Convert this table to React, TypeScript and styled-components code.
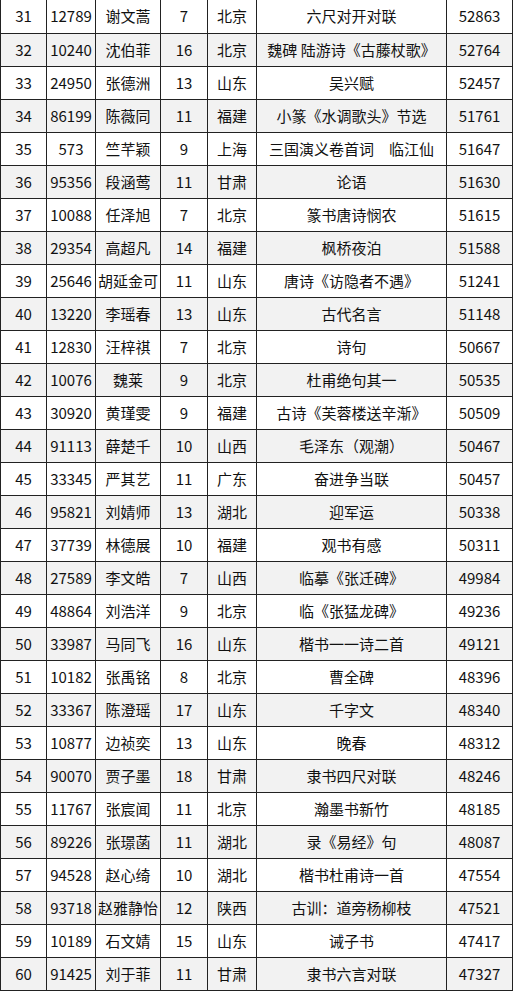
import React from "react";
import styled, { createGlobalStyle } from "styled-components";

const Global = createGlobalStyle`
  html, body { margin: 0; padding: 0; background: #fff; }
  body { font-family: "Noto Sans CJK SC", "Noto Sans", sans-serif; }
`;

type Row = [number, string, string, number, string, string, string];

const rows: Row[] = [
  [31, "12789", "谢文蒿", 7, "北京", "六尺对开对联", "52863"],
  [32, "10240", "沈伯菲", 16, "北京", "魏碑 陆游诗《古藤杖歌》", "52764"],
  [33, "24950", "张德洲", 13, "山东", "吴兴赋", "52457"],
  [34, "86199", "陈薇同", 11, "福建", "小篆《水调歌头》节选", "51761"],
  [35, "573", "竺芊颖", 9, "上海", "三国演义卷首词　临江仙", "51647"],
  [36, "95356", "段涵莺", 11, "甘肃", "论语", "51630"],
  [37, "10088", "任泽旭", 7, "北京", "篆书唐诗悯农", "51615"],
  [38, "29354", "高超凡", 14, "福建", "枫桥夜泊", "51588"],
  [39, "25646", "胡延金可", 11, "山东", "唐诗《访隐者不遇》", "51241"],
  [40, "13220", "李瑶春", 13, "山东", "古代名言", "51148"],
  [41, "12830", "汪梓祺", 7, "北京", "诗句", "50667"],
  [42, "10076", "魏莱", 9, "北京", "杜甫绝句其一", "50535"],
  [43, "30920", "黄瑾雯", 9, "福建", "古诗《芙蓉楼送辛渐》", "50509"],
  [44, "91113", "薛楚千", 10, "山西", "毛泽东（观潮）", "50467"],
  [45, "33345", "严其艺", 11, "广东", "奋进争当联", "50457"],
  [46, "95821", "刘婧师", 13, "湖北", "迎军运", "50338"],
  [47, "37739", "林德展", 10, "福建", "观书有感", "50311"],
  [48, "27589", "李文皓", 7, "山西", "临摹《张迁碑》", "49984"],
  [49, "48864", "刘浩洋", 9, "北京", "临《张猛龙碑》", "49236"],
  [50, "33987", "马同飞", 16, "山东", "楷书一一诗二首", "49121"],
  [51, "10182", "张禹铭", 8, "北京", "曹全碑", "48396"],
  [52, "33367", "陈澄瑶", 17, "山东", "千字文", "48340"],
  [53, "10877", "边祯奕", 13, "山东", "晚春", "48312"],
  [54, "90070", "贾子墨", 18, "甘肃", "隶书四尺对联", "48246"],
  [55, "11767", "张宸闻", 11, "北京", "瀚墨书新竹", "48185"],
  [56, "89226", "张璟菡", 11, "湖北", "录《易经》句", "48087"],
  [57, "94528", "赵心绮", 10, "湖北", "楷书杜甫诗一首", "47554"],
  [58, "93718", "赵雅静怡", 12, "陕西", "古训：道旁杨柳枝", "47521"],
  [59, "10189", "石文婧", 15, "山东", "诫子书", "47417"],
  [60, "91425", "刘于菲", 11, "甘肃", "隶书六言对联", "47327"],
];

const widths = [46, 49, 65, 47, 49, 190, 66];

const Table = styled.table`
  border-collapse: collapse;
  table-layout: fixed;
  width: 513px;
  color: #111;
  font-size: 15px;
  border-left: 1px solid #222;
  border-right: 1px solid #222;
`;

const Tr = styled.tr<{ $shaded: boolean }>`
  height: 33px;
  background: ${(p) => (p.$shaded ? "#f2f2f2" : "#ffffff")};
`;

const Td = styled.td`
  border-left: 1px solid #222;
  border-right: 1px solid #222;
  border-bottom: 1px solid #222;
  padding: 0;
  text-align: center;
  vertical-align: middle;
  white-space: nowrap;
  overflow: hidden;
  line-height: 32px;
`;

export default function App() {
  return (
    <>
      <Global />
      <Table>
        <colgroup>
          {widths.map((w, i) => (
            <col key={i} style={{ width: w }} />
          ))}
        </colgroup>
        <tbody>
          {rows.map((r) => (
            <Tr key={r[0]} $shaded={r[0] % 2 === 0}>
              {r.map((c, i) => (
                <Td key={i}>{c}</Td>
              ))}
            </Tr>
          ))}
        </tbody>
      </Table>
    </>
  );
}
